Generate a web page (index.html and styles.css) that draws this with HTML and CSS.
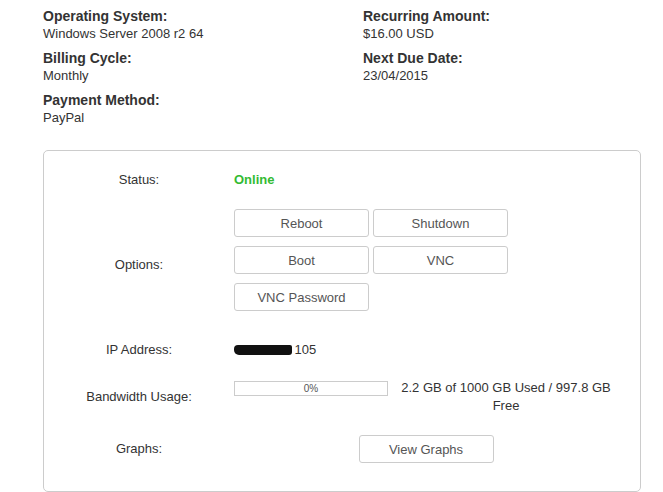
FILE: index.html
```html
<!DOCTYPE html>
<html>
<head>
  <link rel="stylesheet" href="styles.css">
</head>
<body>
  <div class="summary">
    <div class="summary-col">
      <div class="field">
        <div class="field-label">Operating System:</div>
        <div class="field-value">Windows Server 2008 r2 64</div>
      </div>
      <div class="field">
        <div class="field-label">Billing Cycle:</div>
        <div class="field-value">Monthly</div>
      </div>
      <div class="field">
        <div class="field-label">Payment Method:</div>
        <div class="field-value">PayPal</div>
      </div>
    </div>
    <div class="summary-col">
      <div class="field">
        <div class="field-label">Recurring Amount:</div>
        <div class="field-value">$16.00 USD</div>
      </div>
      <div class="field">
        <div class="field-label">Next Due Date:</div>
        <div class="field-value">23/04/2015</div>
      </div>
    </div>
  </div>

  <div class="panel">
    <div class="row">
      <div class="row-label">Status:</div>
      <div class="row-value"><span class="online">Online</span></div>
    </div>
    <div class="row">
      <div class="row-label">Options:</div>
      <div class="row-value">
        <div class="options">
          <button class="btn">Reboot</button>
          <button class="btn">Shutdown</button>
          <button class="btn">Boot</button>
          <button class="btn">VNC</button>
          <button class="btn">VNC Password</button>
        </div>
      </div>
    </div>
    <div class="row row-ip">
      <div class="row-label">IP Address:</div>
      <div class="row-value"><span class="masked"></span> 105</div>
    </div>
    <div class="row">
      <div class="row-label">Bandwidth Usage:</div>
      <div class="row-value usage">
        <div class="usage-bar">0%</div>
        <div class="usage-text">2.2 GB of 1000 GB Used / 997.8 GB Free</div>
      </div>
    </div>
    <div class="row">
      <div class="row-label">Graphs:</div>
      <div class="row-value graphs">
        <button class="btn">View Graphs</button>
      </div>
    </div>
  </div>
</body>
</html>
```

FILE: styles.css
```css
body {
  margin: 0;
  padding: 7px 0 0 43px;
  font-family: "Liberation Sans", Arial, sans-serif;
  color: #333;
  background: #fff;
}

/* product details on top, two columns */
.summary {
  display: flex;
}
.summary-col {
  width: 320px;
  flex-shrink: 0;
}
.field {
  margin-bottom: 6px;
}
.field:last-child {
  margin-bottom: 0;
}
.field-label {
  font-size: 14px;
  font-weight: bold;
  line-height: 18px;
}
.field-value {
  font-size: 13px;
  line-height: 18px;
}

/* server control box */
.panel {
  box-sizing: border-box;
  width: 598px;
  margin-top: 23px;
  padding: 20px 21px 28px 0;
  border: 1px solid #ccc;
  border-radius: 5px;
  display: flex;
  flex-direction: column;
  gap: 20px;
}
.row {
  display: flex;
  align-items: center;
}
.row-ip {
  padding-top: 1px;
}
.row-label {
  width: 190px;
  text-align: center;
  font-size: 13px;
  line-height: 18px;
}
.row-value {
  width: 384px;
  font-size: 13px;
  line-height: 18px;
}
.online {
  color: #33bb33;
  font-weight: bold;
}

.options {
  display: grid;
  grid-template-columns: 135px 135px;
  gap: 9px 4px;
  padding-bottom: 9px;
}
.btn {
  height: 28px;
  padding: 0;
  border: 1px solid #ccc;
  border-radius: 3px;
  background: #fff;
  font-family: "Liberation Sans", Arial, sans-serif;
  font-size: 13px;
  color: #555;
}
.graphs {
  text-align: center;
}
.graphs .btn {
  width: 135px;
}

/* hidden part of the address */
.masked {
  display: inline-block;
  width: 58px;
  height: 10px;
  margin-right: -1px;
  vertical-align: -1px;
  background: #111;
  border-radius: 4px 2px 3px 5px;
}

.usage {
  display: flex;
  align-items: flex-start;
}
.usage-bar {
  box-sizing: border-box;
  width: 154px;
  height: 15px;
  margin-top: 2px;
  border: 1px solid #ccc;
  font-size: 10px;
  line-height: 13px;
  text-align: center;
  color: #555;
}
.usage-text {
  width: 222px;
  margin-left: 7px;
  text-align: center;
}
```
